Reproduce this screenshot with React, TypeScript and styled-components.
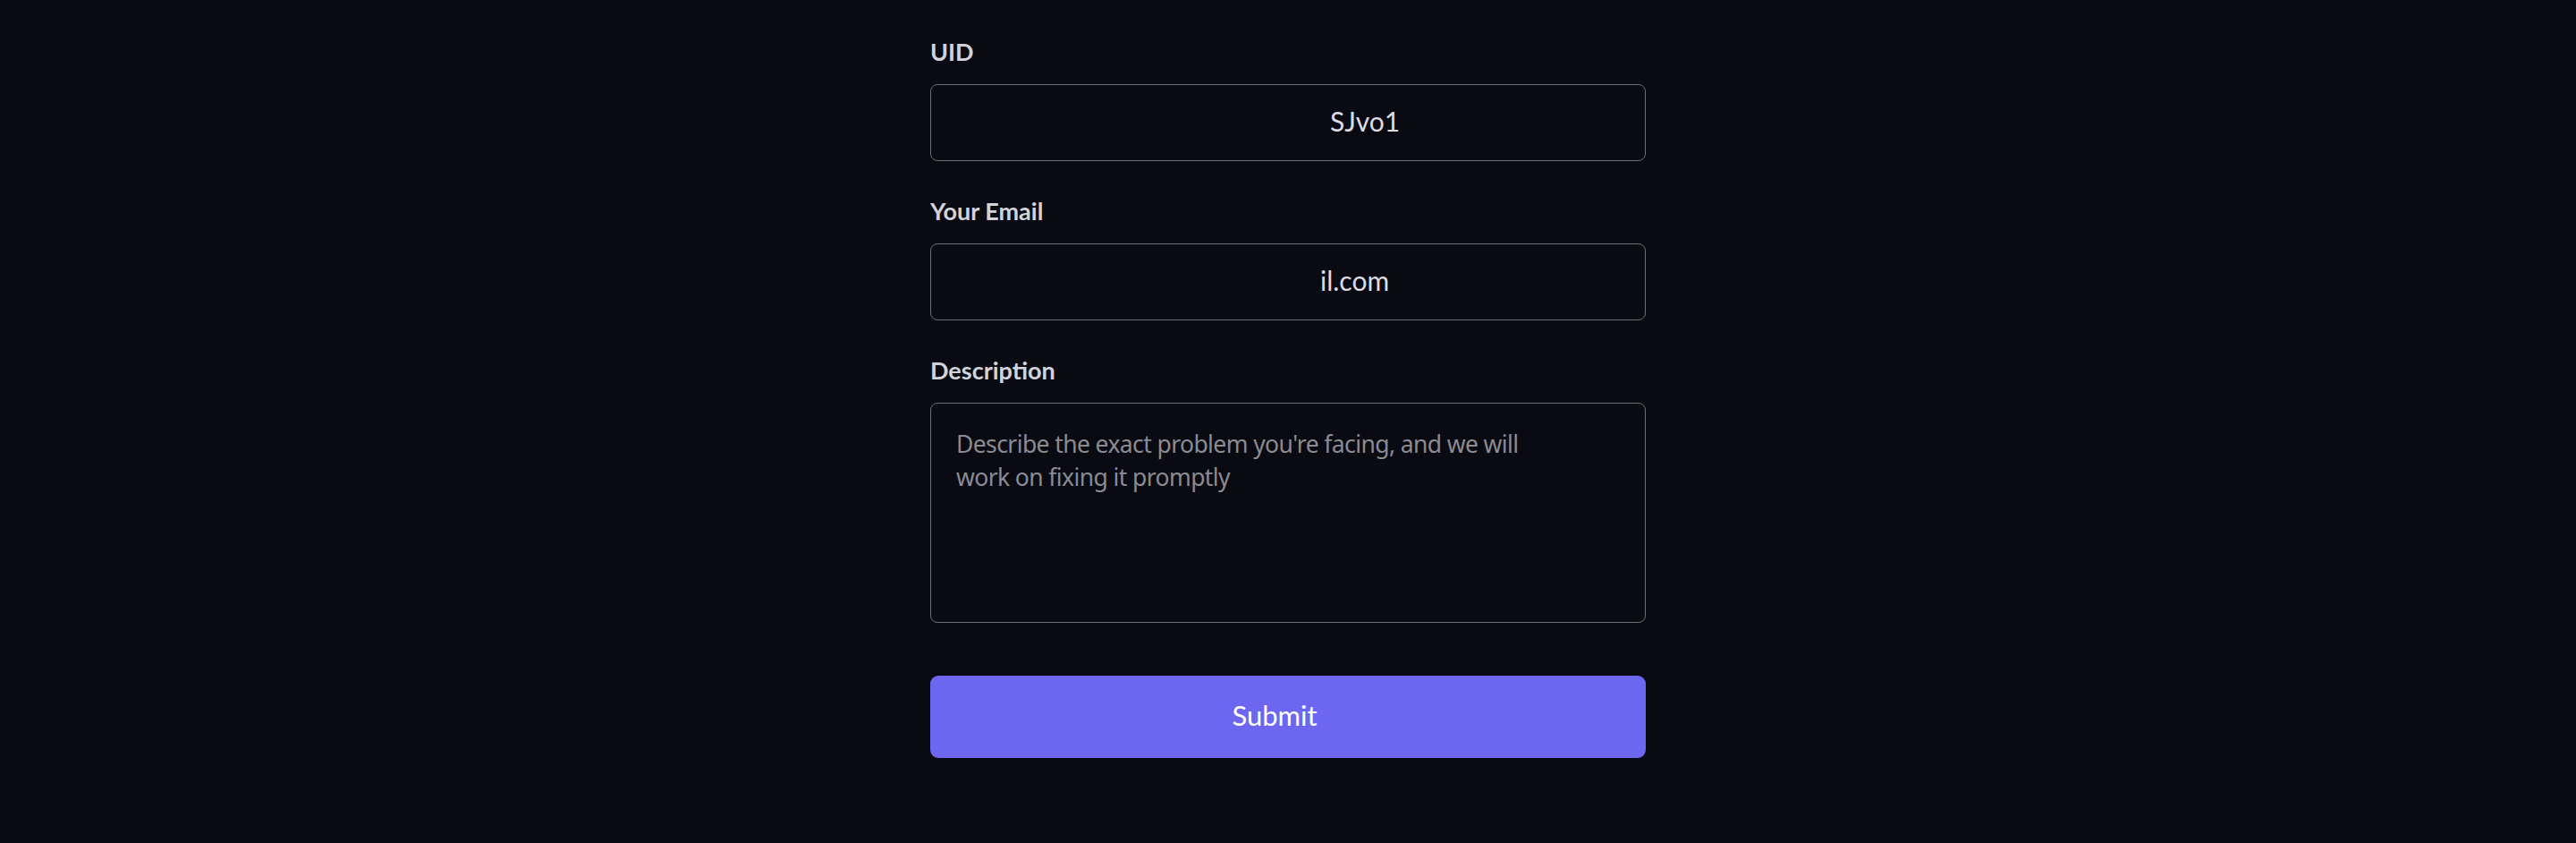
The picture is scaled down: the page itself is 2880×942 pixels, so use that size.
import React from "react";
import styled, { createGlobalStyle } from "styled-components";

const GlobalStyle = createGlobalStyle`
  html, body {
    margin: 0;
    padding: 0;
    background: #0a0a13;
  }
  * { box-sizing: border-box; }
`;

const Page = styled.div`
  width: 100%;
  min-height: 942px;
  background: #0a0a13;
  display: flex;
  justify-content: center;
`;

const Form = styled.form`
  width: 800px;
  padding-top: 42px;
  display: flex;
  flex-direction: column;
  gap: 40px;
`;

const Field = styled.div`
  display: flex;
  flex-direction: column;
  gap: 20px;
`;

const Label = styled.label`
  font-family: Lato, "Noto Sans", sans-serif;
  font-weight: 700;
  font-size: 27px;
  line-height: 32px;
  color: #d2d2da;
`;

const TextInput = styled.input<{ $indent: number }>`
  width: 100%;
  height: 86px;
  background: #0a0a13;
  border: 1.5px solid #6c6c75;
  border-radius: 8px;
  padding: 0 0 4px ${(p) => p.$indent}px;
  font-family: Lato, "Noto Sans", sans-serif;
  font-size: 30px;
  color: #dcdce4;
  outline: none;
`;

const TextArea = styled.textarea`
  width: 100%;
  height: 246px;
  background: #0a0a13;
  border: 1.5px solid #6c6c75;
  border-radius: 8px;
  padding: 27px 90px 0 28px;
  font-family: "Noto Sans", "Open Sans", sans-serif;
  font-size: 26.5px;
  letter-spacing: -0.6px;
  line-height: 37px;
  color: #dcdce4;
  resize: none;
  outline: none;
  &::placeholder {
    color: #8b8b92;
  }
`;

const SubmitButton = styled.button`
  margin-top: 19px;
  width: 100%;
  height: 92px;
  border: none;
  border-radius: 9px;
  background: #6c66f0;
  color: #ffffff;
  font-family: Lato, "Noto Sans", sans-serif;
  font-size: 31px;
  padding: 0 30px 4px 0;
  cursor: pointer;
`;

export default function App() {
  return (
    <>
      <GlobalStyle />
      <Page>
        <Form onSubmit={(e) => e.preventDefault()}>
          <Field>
            <Label htmlFor="uid">UID</Label>
            <TextInput id="uid" $indent={446} defaultValue="SJvo1" />
          </Field>
          <Field>
            <Label htmlFor="email">Your Email</Label>
            <TextInput id="email" $indent={435} defaultValue="il.com" />
          </Field>
          <Field>
            <Label htmlFor="desc">Description</Label>
            <TextArea
              id="desc"
              placeholder="Describe the exact problem you're facing, and we will work on fixing it promptly"
            />
          </Field>
          <SubmitButton type="submit">Submit</SubmitButton>
        </Form>
      </Page>
    </>
  );
}
